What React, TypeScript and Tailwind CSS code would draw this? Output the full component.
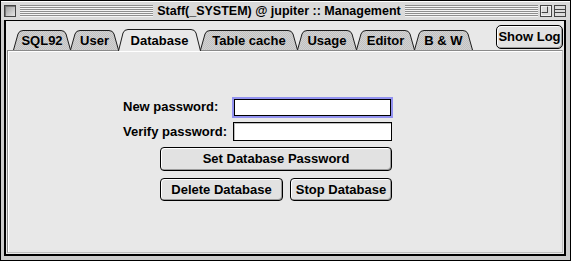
import React from "react";

type Tab = { label: string; w: number; active?: boolean };

const tabs: Tab[] = [
  { label: "SQL92", w: 58 },
  { label: "User", w: 49 },
  { label: "Database", w: 83, active: true },
  { label: "Table cache", w: 98 },
  { label: "Usage", w: 60 },
  { label: "Editor", w: 59 },
  { label: "B & W", w: 59 },
];

const font = "font-['Liberation_Sans',Arial,sans-serif]";

function TabShape({ w, h, active }: { w: number; h: number; active?: boolean }) {
  const d = `M0.5 ${h} L5 4 Q6.2 0.5 10 0.5 L${w - 10} 0.5 Q${w - 6.2} 0.5 ${w - 5} 4 L${w - 0.5} ${h}`;
  return (
    <svg className="absolute inset-0" width={w} height={h} viewBox={`0 0 ${w} ${h}`}>
      <defs>
        <pattern id="dither" width="2" height="2" patternUnits="userSpaceOnUse">
          <rect width="2" height="2" fill="#d2d2d2" />
          <rect width="1" height="1" fill="#c0c0c0" />
          <rect x="1" y="1" width="1" height="1" fill="#c0c0c0" />
        </pattern>
      </defs>
      <path d={d} fill={active ? "#e8e8e8" : "url(#dither)"} stroke="#1c1c1c" strokeWidth="1" />
    </svg>
  );
}

function Stripes() {
  return (
    <div className="h-[12px] flex-1 bg-[repeating-linear-gradient(to_bottom,#8e8e8e_0px,#8e8e8e_1px,#f4f4f4_1px,#f4f4f4_2px)]" />
  );
}

function MacButton({ children, className }: { children: React.ReactNode; className?: string }) {
  return (
    <button
      className={
        "flex items-center justify-center rounded-[4px] border border-black bg-[#e2e2e2] text-[13px] font-bold text-black shadow-[inset_1px_1px_0_#ffffff,inset_-1px_-1px_0_#9c9c9c] " +
        (className ?? "")
      }
    >
      {children}
    </button>
  );
}

export default function App() {
  return (
    <div className={`${font} w-[571px] h-[261px] border border-black bg-[#cccccc] flex flex-col overflow-hidden`}>
      {/* title bar */}
      <div className="h-[19px] flex items-center pl-[3px] pr-[4px] bg-[#dadada] border-t border-t-white">
        <div className="w-[12px] h-[12px] border border-[#444] bg-[linear-gradient(135deg,#9a9a9a,#e6e6e6)] shadow-[inset_1px_1px_0_#777]" />
        <div className="w-[4px]" />
        <Stripes />
        <div className="px-[4px] text-[12.5px] font-bold text-black leading-none whitespace-nowrap">
          Staff(_SYSTEM) @ jupiter :: Management
        </div>
        <Stripes />
        <div className="w-[2px]" />
        <svg width="12" height="12" viewBox="0 0 12 12">
          <rect x="0.5" y="0.5" width="11" height="11" fill="#dcdcdc" stroke="#444" />
          <rect x="0.5" y="0.5" width="7" height="7" fill="none" stroke="#444" />
          <rect x="1.5" y="1.5" width="9" height="9" fill="none" stroke="#fff" strokeOpacity="0.6" />
        </svg>
        <div className="w-[2px]" />
        <svg width="12" height="12" viewBox="0 0 12 12">
          <rect x="0.5" y="0.5" width="11" height="11" fill="#dcdcdc" stroke="#444" />
          <line x1="1" y1="4.5" x2="11" y2="4.5" stroke="#444" />
          <line x1="1" y1="7.5" x2="11" y2="7.5" stroke="#444" />
        </svg>
      </div>

      {/* window frame */}
      <div className="flex-1 flex pl-[3px] pr-[4px] pb-[4px]">
        <div className="flex-1 flex flex-col border-black border-l-2 border-t border-r-2 border-b-2 bg-[#e8e8e8]">
          {/* tab row */}
          <div className="h-[29px] flex items-end pl-[7px] pr-[1px] relative z-10">
            {tabs.map((t, i) => (
              <div
                key={t.label}
                className={
                  "relative flex items-center justify-center text-[13px] font-bold text-black " +
                  (i > 0 ? "-ml-[1px] " : "") +
                  (t.active ? "h-[22px] -mb-[1px] z-10 pt-[1px]" : "h-[20px]")
                }
                style={{ width: t.w }}
              >
                <TabShape w={t.w} h={t.active ? 22 : 20} active={t.active} />
                <span className="relative leading-none">{t.label}</span>
              </div>
            ))}
            <div className="flex-1" />
            <MacButton className="w-[67px] h-[24px] mb-[1px] rounded-[5px]">Show Log</MacButton>
          </div>

          {/* panel */}
          <div className="flex-1 mx-[1px] mb-[1px] border border-[#8a8a8a] border-r-[#bdbdbd] border-b-[#bdbdbd] shadow-[inset_1px_1px_0_#ffffff]">
            <div className="ml-[115px] mt-[45px] flex flex-col">
              <div className="flex items-center h-[22px]">
                <span className="w-[110px] text-[13px] font-bold text-black">New password:</span>
                <div className="w-[157px] h-[17px] ml-[1px] bg-white border border-black outline outline-2 outline-[#9292f0]" />
              </div>
              <div className="flex items-center h-[21px] mt-[3px]">
                <span className="w-[110px] text-[13px] font-bold text-black">Verify password:</span>
                <div className="w-[159px] h-[19px] bg-white border border-black shadow-[inset_1px_1px_0_#bdbdbd]" />
              </div>
              <div className="ml-[37px] mt-[5px] flex flex-col">
                <MacButton className="w-[232px] h-[24px]">Set Database Password</MacButton>
                <div className="flex gap-[7px] mt-[7px]">
                  <MacButton className="w-[123px] h-[23px]">Delete Database</MacButton>
                  <MacButton className="w-[102px] h-[23px]">Stop Database</MacButton>
                </div>
              </div>
            </div>
          </div>
        </div>
      </div>
    </div>
  );
}
